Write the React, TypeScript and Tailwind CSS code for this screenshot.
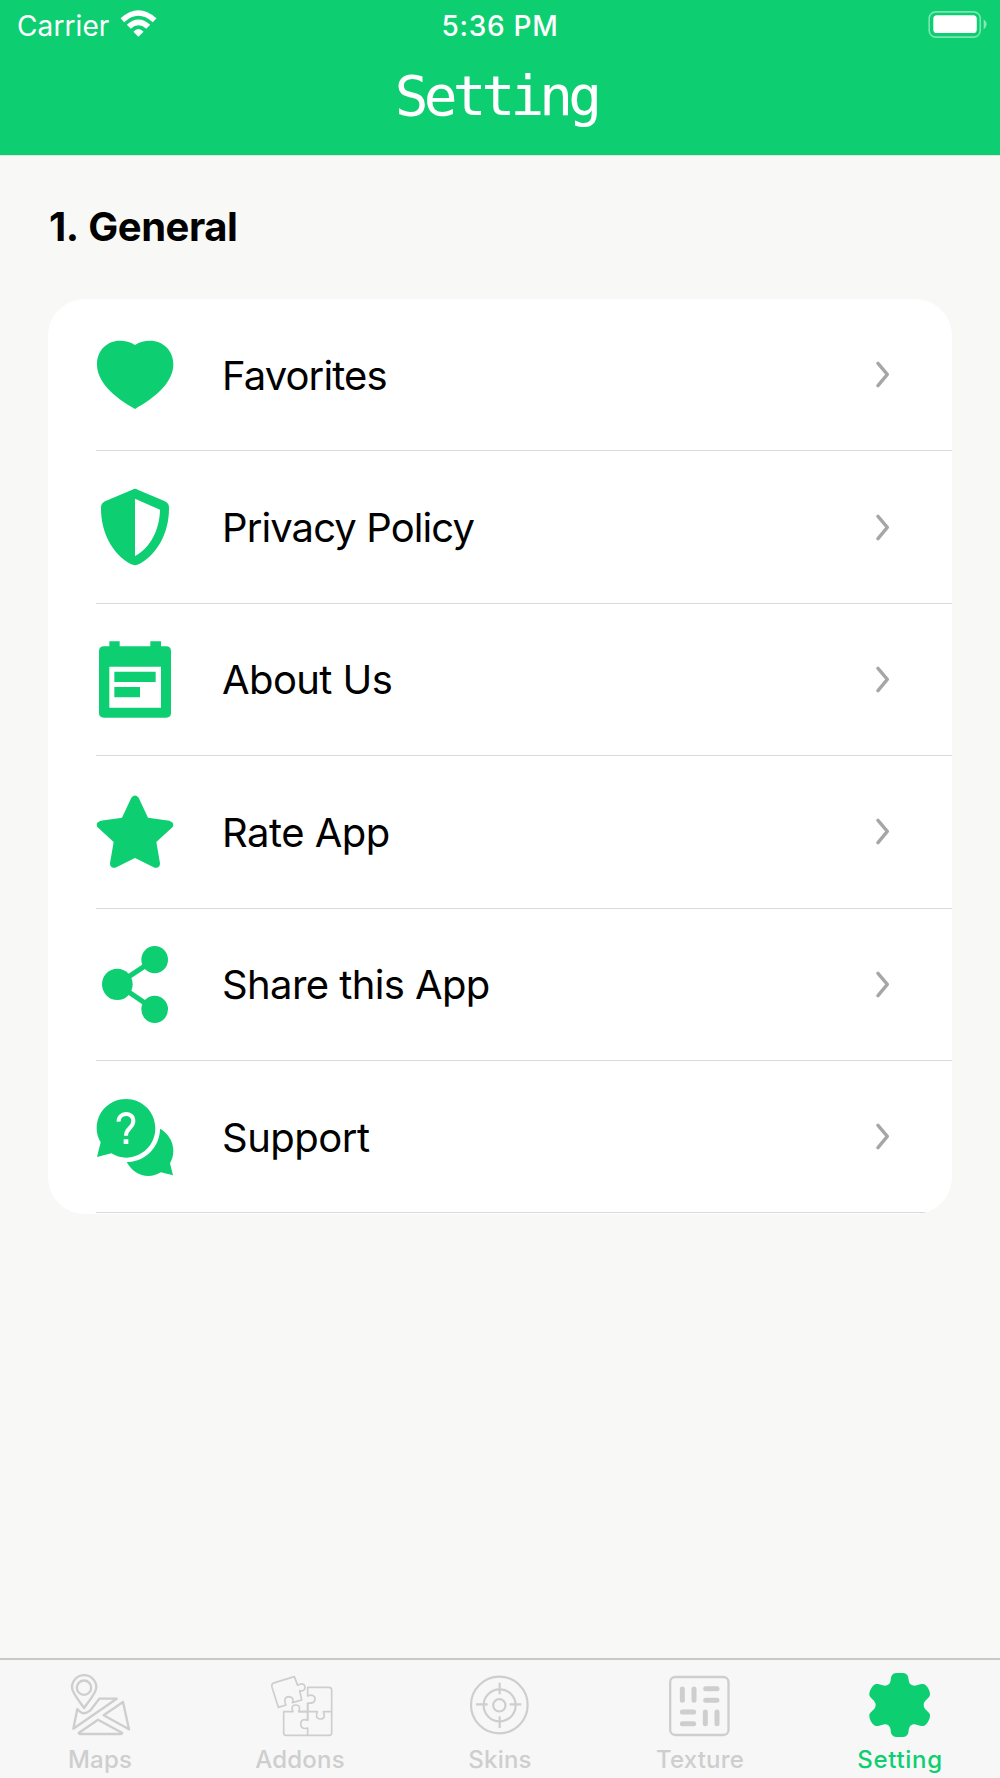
import type { ReactNode } from 'react'

interface IconProps {
  viewBox: string
  children: ReactNode
}

function Icon({ viewBox, children }: IconProps) {
  return (
    <svg viewBox={viewBox} className="size-20 shrink-0" fill="currentColor" aria-hidden="true">
      {children}
    </svg>
  )
}

const rows: { label: string; spacing: string; icon: ReactNode }[] = [
  {
    label: 'Favorites',
    spacing: 'tracking-[-0.9px]',
    icon: (
      <Icon viewBox="165 435 240 240">
        <path d="M285 465C271 455 256 452 240 452C200 452 171 482 171 523C171 575 219 620 285 657C351 620 400 575 400 523C400 482 370 452 330 452C314 452 298 455 285 465Z" />
      </Icon>
    ),
  },
  {
    label: 'Privacy Policy',
    spacing: 'tracking-[-0.9px]',
    icon: (
      <Icon viewBox="45 81 240 240">
        <path
          fillRule="evenodd"
          d="M157 89Q165 84 173 89L255 124Q267 130 267 142C268 215 234 281 178 312Q165 319 152 312C96 281 62 215 63 142Q63 130 75 124ZM165 116V288C211 264 239 208 240 149Z"
        />
      </Icon>
    ),
  },
  {
    label: 'About Us',
    spacing: 'tracking-[-0.6px]',
    icon: (
      <Icon viewBox="45 538 240 240">
        <path
          fillRule="evenodd"
          d="M88 545H119V560H211V545H243V560H258Q273 560 273 575V760Q273 774 258 774H72Q57 774 57 760V575Q57 560 72 560H88ZM88 621V744H243V621ZM103 636H227V667H103ZM103 682H180V713H103Z"
        />
      </Icon>
    ),
  },
  {
    label: 'Rate App',
    spacing: 'tracking-[-0.5px]',
    icon: (
      <Icon viewBox="45 66 240 240">
        <path d="M154 83Q165 70 176 83L204 143L268 152Q285 158 278 171L229 216L240 280Q240 296 224 293L165 264L106 293Q90 296 90 280L101 216L52 171Q45 158 62 152L126 143Z" />
      </Icon>
    ),
  },
  {
    label: 'Share this App',
    spacing: 'tracking-[-0.6px]',
    icon: (
      <Icon viewBox="45 522 240 240">
        <path d="M223 569L112 643L223 718" fill="none" stroke="currentColor" strokeWidth="15" />
        <ellipse cx="224" cy="569" rx="40" ry="41" />
        <ellipse cx="112" cy="643" rx="46" ry="47" />
        <ellipse cx="224" cy="718" rx="40" ry="41" />
      </Icon>
    ),
  },
  {
    label: 'Support',
    spacing: 'tracking-[-0.5px]',
    icon: (
      <Icon viewBox="45 51 240 240">
        <path d="M138 57C187 57 226 96 226 145C226 194 187 233 138 233C122 233 107 228 94 220L51 231L62 187C54 174 50 160 50 145C50 96 89 57 138 57Z" />
        <path d="M240 146C264 159 280 184 280 212C280 226 276 239 270 250L279 286L243 277C231 284 218 288 205 288C178 288 154 272 140 246C191 246 239 206 240 146Z" />
        <path d="M116 125C114 96 160 94 160 123C160 145 138 143 138 167" fill="none" stroke="white" strokeWidth="12" />
        <path d="M131 178H145V192H131Z" fill="white" />
      </Icon>
    ),
  },
]

const tabs: { label: string; active?: boolean; icon: ReactNode }[] = [
  {
    label: 'Maps',
    icon: (
      <Icon viewBox="60 45 240 240">
        <g fill="none" stroke="currentColor" strokeWidth="7" strokeLinejoin="round">
          <path d="M132 174C119 153 96 130 96 112A36.500 36.500 0 0 1 169 112C169 130 146 153 132 174Z" />
          <circle cx="132" cy="113" r="21.500" />
          <path d="M112 177L100 236L230 146H178L150 182Q132 196 119 184Z" />
          <path d="M249 156L191 196L267 238Z" />
          <path d="M174 209L116 249Q116 252 120 252H243Q248 252 246 248Z" />
        </g>
      </Icon>
    ),
  },
  {
    label: 'Addons',
    icon: (
      <Icon viewBox="660 45 240 240">
        <g fill="none" stroke="currentColor" strokeWidth="5" strokeLinejoin="round">
          <path d="M763 80L704 98Q693 101 696 112L715 172L738 165C731 151 734 141 746 140C758 141 762 148 757 158L785 150L779 122C788 125 797 119 795 110C793 100 782 99 773 106Z" />
          <path d="M803 256V234C790 238 782 233 782 222C782 210 791 206 803 211V159C815 161 825 158 825 147C825 136 815 133 803 138V112H866Q875 112 875 120V250Q875 256 867 256H738Q731 256 731 248V185H759C753 174 756 165 767 165C779 165 782 174 776 185H832C827 197 829 207 841 207C853 207 856 197 850 185H875" />
          <path d="M776 185H803M803 159V211" />
        </g>
      </Icon>
    ),
  },
  {
    label: 'Skins',
    icon: (
      <Icon viewBox="59 45 240 240">
        <g fill="none" stroke="currentColor" strokeWidth="6.500">
          <circle cx="177" cy="165" r="85" />
          <circle cx="178" cy="166" r="48" />
          <circle cx="177" cy="166" r="18.500" />
          <path d="M178 98V133M178 199V234M107 163H142M208 163H243" />
        </g>
      </Icon>
    ),
  },
  {
    label: 'Texture',
    icon: (
      <Icon viewBox="660 45 240 240">
        <rect x="690.500" y="81" width="175" height="174" rx="15" fill="none" stroke="currentColor" strokeWidth="7" />
        <path
          d="M727 117V151M762 117V151M797 116H831M797 151H831M727 186H761M727 221H761M796 186V221M831 186V221"
          fill="none"
          stroke="currentColor"
          strokeWidth="15"
          strokeLinecap="round"
        />
      </Icon>
    ),
  },
  {
    label: 'Setting',
    active: true,
    icon: (
      <Icon viewBox="300 45 240 240">
        <path d="M409 69H429Q446 70 446 91Q448 107 464 107C475 105 482 99 493 103C502 107 511 124 510 134C509 145 491 150 491 165C491 181 509 184 510 195C511 207 501 223 493 227C482 231 475 225 464 223Q448 223 446 240Q446 260 429 261H409Q392 260 392 240Q390 223 374 223C363 225 356 231 345 227C336 223 327 207 328 195C329 184 347 181 347 165C347 150 329 145 328 134C327 124 337 107 345 103C356 99 363 105 374 107Q390 107 392 91Q392 70 409 69Z" />
      </Icon>
    ),
  },
]

function StatusBar() {
  return (
    <div className="grid h-[51px] grid-cols-3 items-center">
      <div className="flex items-center gap-[11px] pl-[17px]">
        <span className="text-[28px] tracking-[0.100px]">Carrier</span>
        <svg viewBox="360 30 111 82" className="-mt-1 h-[27px] w-[37px]" fill="white" aria-hidden="true">
          <path d="M361 55Q415 6 470 55L459 67Q415 28 372 67ZM380 75Q415 43 451 75L439 87Q415 66 392 87ZM400 96Q415 80 431 96L415 111Z" />
        </svg>
      </div>
      <span className="text-center text-[28px] font-medium tracking-[0.700px]">5:36 PM</span>
      <div className="flex justify-end pr-3">
        <svg viewBox="1284 32 180 82" className="-mt-0.5 h-[27px] w-[60px]" fill="white" aria-hidden="true">
          <rect x="1286.500" y="34.500" width="155" height="77" rx="20" fill="none" stroke="white" strokeWidth="5" opacity=".45" />
          <rect x="1299" y="45" width="132" height="54" rx="11" />
          <path d="M1452 57Q1470 72 1452 88Z" opacity=".5" />
        </svg>
      </div>
    </div>
  )
}

export default function App() {
  return (
    <div className="flex h-[1778px] w-[1000px] flex-col overflow-hidden bg-[#f8f8f6] font-[Inter,sans-serif] text-black">
      <header className="h-[155px] shrink-0 bg-[#0dcf71] text-white">
        <StatusBar />
        <h1 className="pt-[3px] pr-2 text-center font-['DejaVu_Sans_Mono',monospace] text-[56px] leading-[84px] tracking-[-4.800px]">
          Setting
        </h1>
      </header>

      <main className="flex-1 border-t border-[#e3e3e1] px-12">
        <h2 className="pt-[45px] pl-px text-[40px] leading-[52px] font-bold tracking-[-0.500px] [word-spacing:2px]">
          1. General
        </h2>
        <ul className="mt-[46px] h-[915px] overflow-hidden rounded-[37px] bg-white pl-12">
          {rows.map((row) => (
            <li key={row.label} className="flex h-[152.400px] items-center border-b border-[#d9d9d9]">
              <div className="-ml-px text-[#0dcf71]">{row.icon}</div>
              <span className={`flex-1 pt-0.5 pl-[47px] text-[40px] ${row.spacing}`}>{row.label}</span>
              <svg viewBox="105 240 45 84" className="mr-[62px] -mt-px h-7 w-[15px]" aria-hidden="true">
                <path d="M114 250L142 283L114 317" fill="none" stroke="#a6a6a6" strokeWidth="10" strokeLinecap="round" strokeLinejoin="round" />
              </svg>
            </li>
          ))}
        </ul>
      </main>

      <nav className="grid h-[120px] shrink-0 grid-cols-5 border-t-2 border-[#c9c9c8] bg-[#f7f7f7] pt-[5px]">
        {tabs.map((tab) => (
          <div
            key={tab.label}
            className={`flex flex-col items-center ${tab.active ? 'text-[#0dcf71]' : 'text-[#cecece]'}`}
          >
            {tab.icon}
            <span
              className={`text-2xl leading-[30px] font-medium ${tab.active ? 'tracking-[0.700px]' : 'tracking-[0.200px]'}`}
            >
              {tab.label}
            </span>
          </div>
        ))}
      </nav>
    </div>
  )
}
